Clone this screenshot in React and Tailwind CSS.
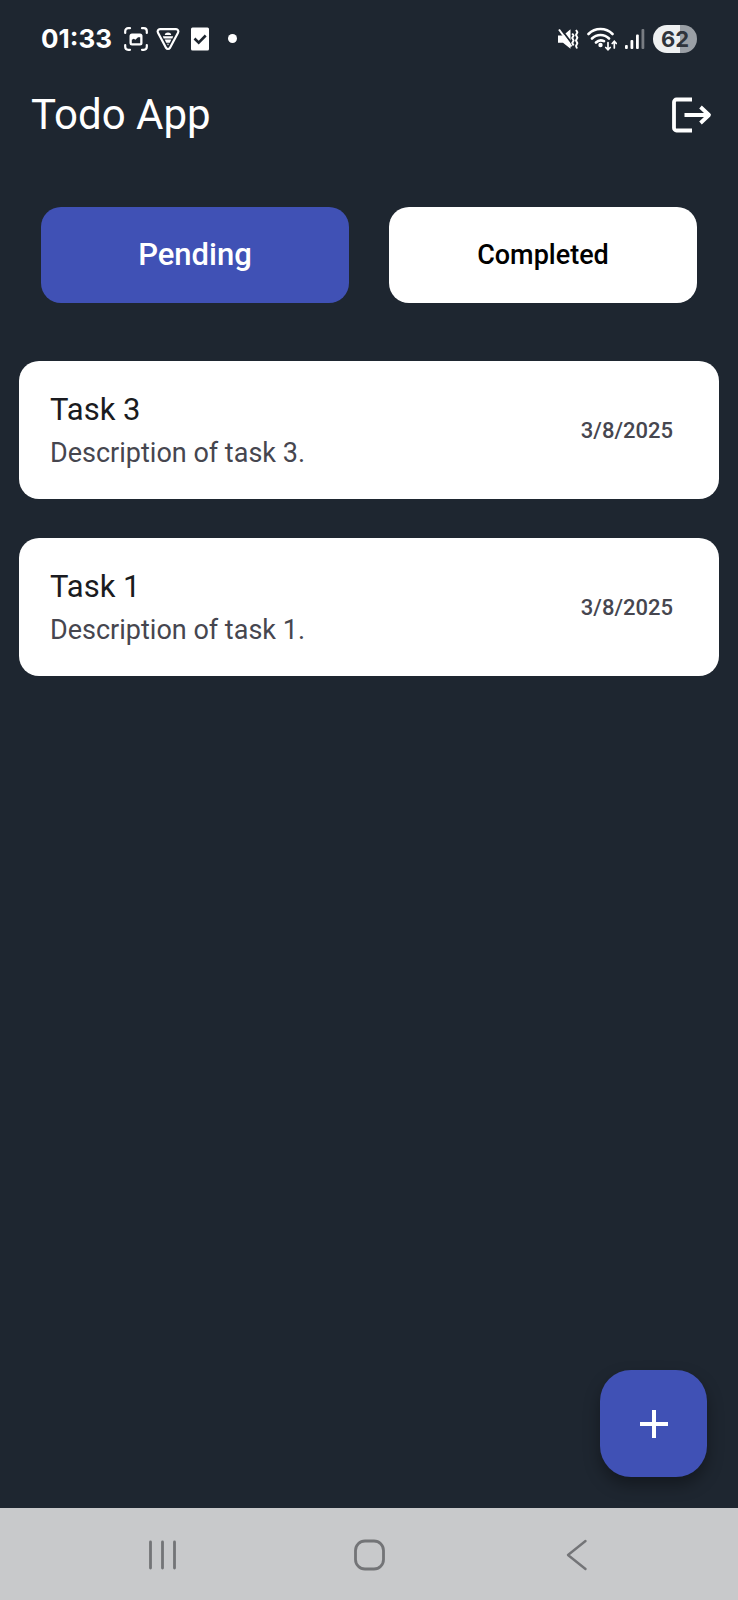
import { useState } from "react";

const tasks = [
  { id: 3, title: "Task 3", description: "Description of task 3.", date: "3/8/2025", done: false },
  { id: 1, title: "Task 1", description: "Description of task 1.", date: "3/8/2025", done: false },
];

function StatusBar() {
  return (
    <div className="flex h-[77px] items-center justify-between px-[41px]">
      <div className="flex items-center gap-2">
        <span className="mr-1 font-['Inter',sans-serif] text-[26px] leading-8 font-bold">01:33</span>
        <svg className="size-6" viewBox="0 0 24 24" fill="none" stroke="currentColor" strokeWidth="2.200" strokeLinecap="round" aria-hidden="true">
          <path d="M1.200 6V4.200a3 3 0 0 1 3-3H6M18 1.200h1.800a3 3 0 0 1 3 3V6M22.800 18v1.800a3 3 0 0 1-3 3H18M6 22.800H4.200a3 3 0 0 1-3-3V18" />
          <rect x="5.500" y="6.500" width="13" height="12" rx="2.500" fill="currentColor" stroke="none" />
          <path d="M7.800 16.200v-3.400l2-1 1.600 1 2.600-2.600h2.200v6z" fill="#1e2630" stroke="none" />
        </svg>
        <svg className="size-6" viewBox="0 0 24 24" fill="none" stroke="currentColor" strokeLinejoin="round" aria-hidden="true">
          <path d="M4 2.200h16a2.300 2.300 0 0 1 2 3.500l-8.100 15.200a2.200 2.200 0 0 1-3.800 0L2 5.700a2.300 2.300 0 0 1 2-3.500z" strokeWidth="2.200" />
          <path d="M8.800 8a3.200 2.600 0 0 1 6.400 0zM6.800 9.200h10.400l-.9 2.200H7.700zM8.700 12.400h6.600L13.800 15.800h-3.600zM11 16.800h2l-1 1.700z" fill="currentColor" stroke="none" />
        </svg>
        <svg className="size-6" viewBox="0 0 24 24" aria-hidden="true">
          <rect x="3" y="0.500" width="18" height="23" rx="1.500" fill="currentColor" />
          <path d="M6.500 11.500l4.200 4.200 7-7.200" fill="none" stroke="#1e2630" strokeWidth="2.600" />
        </svg>
        <span className="ml-2 size-[9px] rounded-full bg-white" />
      </div>
      <div className="flex items-center gap-2">
        <svg className="size-6" viewBox="0 0 24 24" aria-hidden="true">
          <path d="M3 8.500h5L15.500 2.200v19.600L8 15.800H3z" fill="currentColor" />
          <path d="M5.500 1.500l11.500 15" stroke="#1e2630" strokeWidth="2" />
          <path d="M4 2.500l12.500 17" stroke="currentColor" strokeWidth="2" />
          <path d="M17.200 6.500l1.400 2-1.400 2.500 1.400 2.500-1.400 2.500 1.400 2.500M21 3l1.400 2.300L21 8l1.400 2.700L21 13.500l1.400 2.700L21 19l1 2.500" fill="none" stroke="currentColor" strokeWidth="1.900" strokeLinejoin="round" />
        </svg>
        <svg className="h-6 w-[30px]" viewBox="0 0 30 24" fill="none" stroke="currentColor" strokeWidth="2.600" strokeLinecap="round" aria-hidden="true">
          <path d="M1.500 7a17 17 0 0 1 24 0M5 11.500a12 12 0 0 1 17 0M9 15.500a7 7 0 0 1 8-1.300" />
          <circle cx="13.500" cy="18" r="2.200" fill="currentColor" stroke="none" />
          <path d="M21 15.500v7M18.800 20.500l2.200 2.200 2.200-2.200M27.300 21v-6.500M25.200 16.500l2.100-2.200 2.100 2.200" strokeWidth="1.700" />
        </svg>
        <svg className="h-6 w-5" viewBox="0 0 20 24" fill="currentColor" aria-hidden="true">
          <rect x="0" y="18" width="2.800" height="4" rx="1" />
          <rect x="5.500" y="13" width="2.800" height="9" rx="1" />
          <rect x="11" y="7.500" width="2.800" height="14.500" rx="1" />
          <rect x="16.500" y="2" width="2.800" height="20" rx="1" opacity="0.400" />
        </svg>
        <span className="flex h-7 w-11 items-center justify-center rounded-full bg-linear-to-r from-[#eef0f1] from-62% to-[#9a9fa5] to-62% font-['Inter',sans-serif] text-[22px] leading-7 font-bold text-[#30343b]">
          62
        </span>
      </div>
    </div>
  );
}

function TabButton({ active, onClick, children }) {
  return (
    <button
      type="button"
      aria-pressed={active}
      onClick={onClick}
      className={
        active
          ? "h-24 flex-1 rounded-[20px] bg-[#4051b5] text-[31px] font-medium text-white"
          : "h-24 flex-1 rounded-[20px] bg-white text-[27px] font-medium text-black"
      }
    >
      {children}
    </button>
  );
}

function TaskCard({ task }) {
  return (
    <li className="flex items-center justify-between rounded-[20px] bg-white py-[26px] pr-[46px] pl-[31px]">
      <div>
        <h2 className="text-[31px] leading-[46px] text-[#1a1b20]">{task.title}</h2>
        <p className="text-[27px] leading-10 text-[#46464f]">{task.description}</p>
      </div>
      <time className="text-[22px] font-medium text-[#46464f]">{task.date}</time>
    </li>
  );
}

export default function App() {
  const [tab, setTab] = useState("pending");
  const shown = tasks.filter((task) => task.done === (tab === "completed"));

  return (
    <div className="flex min-h-screen flex-col bg-[#1e2630] font-['Roboto',sans-serif] text-white">
      <StatusBar />
      <header className="flex h-[75px] items-center justify-between pr-6 pl-[31px]">
        <h1 className="text-[42px] leading-[48px]">Todo App</h1>
        <button type="button" aria-label="Log out">
          <svg className="h-10 w-11" viewBox="0 0 44 40" fill="none" stroke="currentColor" strokeWidth="3.800" strokeLinejoin="round" aria-hidden="true">
            <path d="M22 4.500H6.500a2.500 2.500 0 0 0-2.500 2.500v26a2.500 2.500 0 0 0 2.500 2.500H22M14.500 20H39M30.500 12l8.500 8-8.500 8" />
          </svg>
        </button>
      </header>

      <main className="flex flex-1 flex-col">
        <div className="flex gap-10 px-[41px] pt-[55px]">
          <TabButton active={tab === "pending"} onClick={() => setTab("pending")}>Pending</TabButton>
          <TabButton active={tab === "completed"} onClick={() => setTab("completed")}>Completed</TabButton>
        </div>
        <ul className="flex flex-col gap-[39px] px-[19px] pt-[58px]">
          {shown.map((task) => (
            <TaskCard key={task.id} task={task} />
          ))}
        </ul>
        <div className="mt-auto flex justify-end pr-[31px] pb-[31px]">
          <button
            type="button"
            aria-label="Add task"
            className="flex size-[107px] items-center justify-center rounded-[31px] bg-[#4051b5] shadow-[0_8px_16px_rgba(0,0,0,0.35)]"
          >
            <svg className="size-7" viewBox="0 0 28 28" fill="none" stroke="currentColor" strokeWidth="4" aria-hidden="true">
              <path d="M14 0v28M0 14h28" />
            </svg>
          </button>
        </div>
      </main>

      <nav className="flex h-[92px] items-center justify-center gap-[175px] bg-[#c8c9cb] pt-0.5 text-[#737477]" aria-label="System">
        <button type="button" aria-label="Recent apps">
          <svg className="size-8" viewBox="0 0 32 32" fill="none" stroke="currentColor" strokeWidth="2.800" strokeLinecap="round" aria-hidden="true">
            <path d="M4.500 3v26M16.500 3v26M28.500 3v26" />
          </svg>
        </button>
        <button type="button" aria-label="Home">
          <svg className="size-8" viewBox="0 0 32 32" fill="none" stroke="currentColor" strokeWidth="2.800" aria-hidden="true">
            <rect x="2.500" y="2" width="28" height="28" rx="9.500" />
          </svg>
        </button>
        <button type="button" aria-label="Back">
          <svg className="size-8" viewBox="0 0 32 32" fill="none" stroke="currentColor" strokeWidth="2.400" strokeLinecap="round" strokeLinejoin="round" aria-hidden="true">
            <path d="M25.500 2L8 16l17.500 14" />
          </svg>
        </button>
      </nav>
    </div>
  );
}
